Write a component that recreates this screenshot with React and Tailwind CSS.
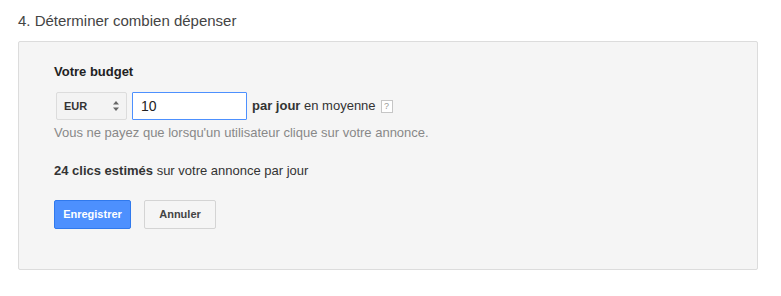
import React, { useState } from 'react';

const App = () => {
  const [budget, setBudget] = useState('10');

  return (
    <div className="w-[781px] h-[296px] bg-white pl-[18px] pt-[11px] text-[#333]" style={{ fontFamily: '"Liberation Sans", Arial, sans-serif' }}>
      <h2 className="text-[15px] leading-[20px] text-[#444] font-normal">4. Déterminer combien dépenser</h2>

      <div className="mt-[10px] w-[740px] h-[229px] bg-[#f5f5f5] border border-[#dcdcdc] rounded-[2px] pl-[35px] pt-[22px]">
        <div className="text-[13px] font-bold text-[#222] leading-[16px]">Votre budget</div>

        <div className="mt-[12px] flex items-center ml-[2px]">
          <div className="w-[71px] h-[28px] border border-[#dcdcdc] rounded-[2px] bg-[#f3f3f3] flex items-center justify-between pl-[7px] pr-[6px]">
            <span className="text-[11px] font-bold text-[#333]">EUR</span>
            <svg width="8" height="12" viewBox="0 0 8 12">
              <path d="M4 1 L7 4.5 H1 Z" fill="#666" />
              <path d="M4 11 L7 7.5 H1 Z" fill="#666" />
            </svg>
          </div>
          <input
            value={budget}
            onChange={e => setBudget(e.target.value)}
            className="ml-[5px] w-[115px] h-[28px] border border-[#4d90fe] bg-white px-[8px] text-[14px] text-[#222] outline-none rounded-[1px]"
          />
          <span className="ml-[5px] text-[13px] text-[#333]">
            <b className="text-[#333]">par jour</b> en moyenne
          </span>
          <span className="ml-[5px] w-[12px] h-[13px] border border-[#c6c6c6] bg-white text-[9px] leading-[11px] text-[#999] flex items-center justify-center">?</span>
        </div>

        <div className="mt-[5px] text-[13px] text-[#888] leading-[16px]">Vous ne payez que lorsqu'un utilisateur clique sur votre annonce.</div>

        <div className="mt-[22px] text-[13px] text-[#333] leading-[16px]">
          <b>24 clics estimés</b> sur votre annonce par jour
        </div>

        <div className="mt-[21px] flex gap-[13px]">
          <button className="w-[77px] h-[29px] rounded-[2px] bg-[#4d90fe] border border-[#3079ed] text-white text-[11px] font-bold">Enregistrer</button>
          <button className="w-[72px] h-[29px] rounded-[2px] bg-[#f5f5f5] border border-[#d4d4d4] text-[#444] text-[11px] font-bold">Annuler</button>
        </div>
      </div>
    </div>
  );
};

export default App;
